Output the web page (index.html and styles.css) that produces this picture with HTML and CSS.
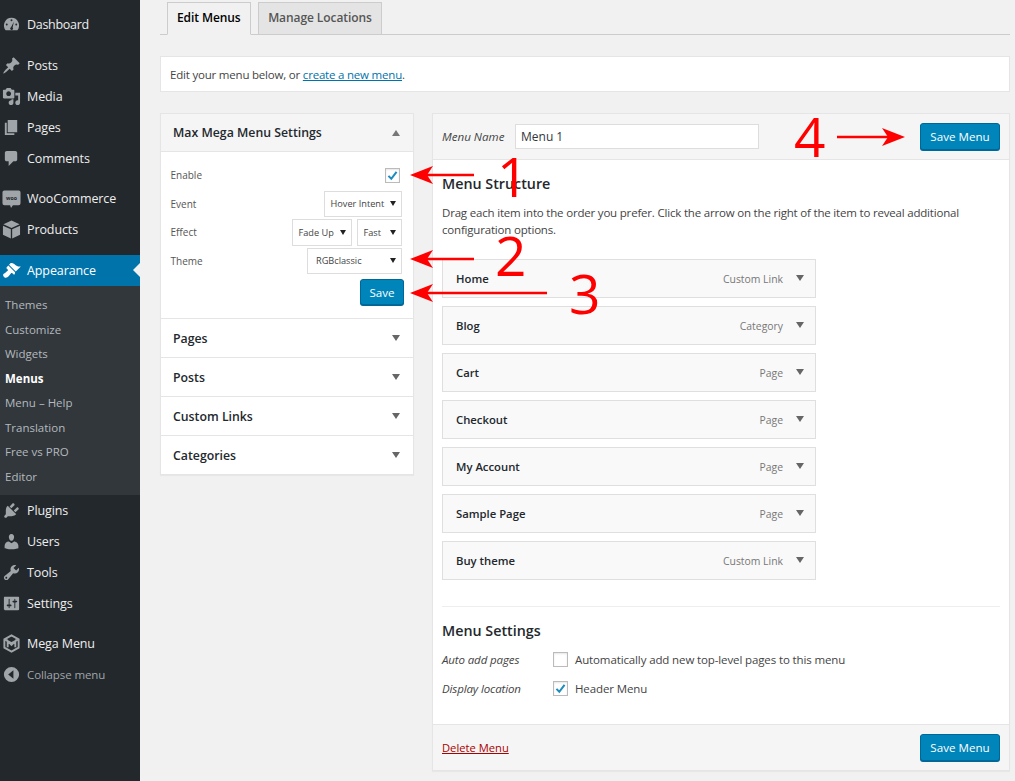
FILE: index.html
```html
<!DOCTYPE html>
<html lang="en">
<head>
<meta charset="utf-8">
<title>Menus</title>
<link rel="stylesheet" href="styles.css">
</head>
<body>
<div class="app">
<nav class="sidebar">
  <div class="group group-a">
    <a class="item"><svg class="ic" viewBox="0 0 20 20"><path d="M10 3a8 8 0 0 0-6.200 13h12.400A8 8 0 0 0 10 3zm0 1.500a1 1 0 1 1 0 2 1 1 0 0 1 0-2zM5 9a1 1 0 1 1 0 2 1 1 0 0 1 0-2zm10 0a1 1 0 1 1 0 2 1 1 0 0 1 0-2zM12.500 7l-1.300 6.200a1.500 1.500 0 1 1-1.700-.3z" fill-rule="evenodd"/></svg><span class="dash">Dashboard</span></a>
  </div>
  <div class="group">
    <a class="item"><svg class="ic" viewBox="0 0 20 20"><path d="M10.440 3.020l1.820-1.820 6.360 6.350-1.830 1.820c-1.050-.68-2.480-.57-3.410.36l-.75.75c-.92.93-1.040 2.350-.35 3.410l-1.830 1.820-2.410-2.410-2.800 2.790c-.42.42-3.380 2.710-3.800 2.290s1.860-3.390 2.280-3.810l2.790-2.790L4.100 9.360l1.830-1.820c1.050.69 2.480.57 3.400-.36l.75-.75c.93-.92 1.050-2.350.36-3.410z"/></svg>Posts</a>
    <a class="item"><svg class="ic" viewBox="0 0 20 20"><path d="M13 11V4c0-.55-.45-1-1-1h-1.670L9 1H5L3.670 3H2c-.55 0-1 .45-1 1v7c0 .55.45 1 1 1h10c.55 0 1-.45 1-1zM7 4.500c1.380 0 2.500 1.120 2.500 2.500S8.380 9.500 7 9.500 4.500 8.380 4.500 7 5.620 4.500 7 4.500zM14 6h5v10.500c0 1.380-1.120 2.500-2.500 2.500S14 17.880 14 16.500s1.120-2.500 2.500-2.500c.17 0 .34.020.5.050V9h-3V6zm-4 8.050V13h2v3.500c0 1.380-1.120 2.500-2.500 2.500S7 17.880 7 16.500 8.120 14 9.500 14c.17 0 .34.020.5.050z"/></svg>Media</a>
    <a class="item"><svg class="ic" viewBox="0 0 20 20"><path d="M6 15V2h10v13H6zm-1 1h8v2H3V5h2v11z"/></svg>Pages</a>
    <a class="item"><svg class="ic" viewBox="0 0 20 20"><path d="M5 2h9c1.100 0 2 .9 2 2v7c0 1.100-.9 2-2 2h-2l-5 5v-5H5c-1.100 0-2-.9-2-2V4c0-1.100.9-2 2-2z"/></svg>Comments</a>
  </div>
  <div class="group">
    <a class="item"><svg class="ic" viewBox="0 0 20 20"><path d="M2.500 1.500h15a2 2 0 0 1 2 2V15a2 2 0 0 1-2 2h-6l-2 3-1-3h-6a2 2 0 0 1-2-2V3.500a2 2 0 0 1 2-2z"/><text class="woo" x="10" y="11.500" text-anchor="middle">woo</text></svg>WooCommerce</a>
    <a class="item"><svg class="ic" viewBox="0 0 20 20"><path d="M10 .5l8.500 4-8.500 4-8.500-4zM1 6l8.300 3.800v9.700L1 15.500zM19 6v9.500l-8.300 4V9.800z"/></svg>Products</a>
  </div>
  <div class="group">
    <a class="item active"><svg class="ic" viewBox="0 0 20 20"><path d="M14.480 11.060L7.410 3.990l1.500-1.500c.5-.56 2.300-.47 3.510.32 1.210.8 1.430 1.280 2.910 2.100 1.180.64 2.450 1.260 4.450.85zm-.71.71L6.700 4.700 4.930 6.470c-.39.39-.39 1.020 0 1.410l1.060 1.060c.39.39.39 1.030 0 1.420-.6.6-1.430 1.110-2.210 1.690-.35.26-.7.53-1.010.84C1.430 13.230.4 14.990 2.140 16.730c1.740 1.740 3.500.71 4.840-.63.31-.31.58-.66.84-1.010.58-.78 1.090-1.610 1.690-2.210.39-.39 1.030-.39 1.420 0l1.060 1.060c.39.39 1.020.39 1.410 0z"/></svg>Appearance<span class="notch"></span></a>
    <div class="submenu">
      <a class="sub">Themes</a>
      <a class="sub">Customize</a>
      <a class="sub">Widgets</a>
      <a class="sub current">Menus</a>
      <a class="sub">Menu – Help</a>
      <a class="sub">Translation</a>
      <a class="sub">Free vs PRO</a>
      <a class="sub">Editor</a>
    </div>
    <a class="item"><svg class="ic" viewBox="0 0 20 20"><path d="M13.110 4.360L9.870 7.600 8 5.730l3.240-3.240c.35-.34 1.050-.2 1.560.32.52.51.66 1.210.31 1.550zm-8 1.770l.91-1.120 9.010 9.010-1.190.84c-.71.71-2.630 1.160-3.820 1.160H6.140L4.900 17.260c-.59.59-1.540.59-2.120 0-.59-.58-.59-1.530 0-2.120l1.240-1.240v-3.880c0-1.130.4-3.190 1.090-3.890zm7.260 3.970l3.240-3.240c.34-.35 1.040-.21 1.550.31.52.51.66 1.210.31 1.550l-3.240 3.250z"/></svg>Plugins</a>
    <a class="item"><svg class="ic" viewBox="0 0 20 20"><path d="M10 9.250c-2.270 0-2.730-3.440-2.730-3.440C7 4.020 7.820 2 9.970 2c2.160 0 2.980 2.020 2.710 3.810 0 0-.41 3.440-2.680 3.440zm0 2.570L12.720 10c2.390 0 4.520 2.330 4.520 4.530v2.490s-3.650 1.130-7.240 1.130c-3.650 0-7.240-1.130-7.240-1.130v-2.490c0-2.250 1.940-4.480 4.470-4.480z"/></svg>Users</a>
    <a class="item"><svg class="ic" viewBox="0 0 20 20"><path d="M16.680 9.770c-1.340 1.340-3.300 1.670-4.950.99l-5.410 6.520c-.99.99-2.590.99-3.580 0s-.99-2.590 0-3.570l6.520-5.420c-.68-1.650-.35-3.610.99-4.950 1.280-1.280 3.120-1.620 4.720-1.060l-2.890 2.890 2.820 2.820 2.860-2.870c.53 1.580.18 3.390-1.080 4.650zM3.810 16.210c.4.39 1.040.39 1.430 0 .4-.4.4-1.040 0-1.430-.39-.4-1.030-.4-1.430 0-.39.39-.39 1.030 0 1.430z"/></svg>Tools</a>
    <a class="item"><svg class="ic" viewBox="0 0 20 20"><path d="M18 16V4c0-.55-.45-1-1-1H3c-.55 0-1 .45-1 1v12c0 .55.45 1 1 1h14c.55 0 1-.45 1-1zM8 11h1c.55 0 1 .45 1 1s-.45 1-1 1H8v1.500c0 .28-.22.5-.5.5s-.5-.22-.5-.5V13H6c-.55 0-1-.45-1-1s.45-1 1-1h1V5.500c0-.28.22-.5.5-.5s.5.22.5.5V11zm5-2h-1c-.55 0-1-.45-1-1s.45-1 1-1h1V5.500c0-.28.22-.5.5-.5s.5.22.5.5V7h1c.55 0 1 .45 1 1s-.45 1-1 1h-1v5.500c0 .28-.22.5-.5.5s-.5-.22-.5-.5V9z"/></svg>Settings</a>
  </div>
  <div class="group">
    <a class="item"><svg class="ic" viewBox="0 0 20 20"><path class="hex" d="M10 1.500l7.500 4.200v8.600L10 18.500l-7.500-4.200V5.700z"/><path class="hex" d="M6 14V7.500l4 4 4-4V14M3 6l7 3.500L17 6"/></svg>Mega Menu</a>
    <a class="item collapse"><svg class="ic" viewBox="0 0 20 20"><path d="M10 2a8 8 0 1 1 0 16 8 8 0 0 1 0-16zm2 3.500L6.500 10l5.500 4.500z" fill-rule="evenodd"/></svg>Collapse menu</a>
  </div>
</nav>

<main class="main">
  <div class="tabs">
    <a class="tab tab-on">Edit Menus</a>
    <a class="tab">Manage Locations</a>
  </div>
  <div class="notice">Edit your menu below, or <a class="link">create a new menu</a>.</div>
  <div class="columns">
    <aside class="accordion">
      <h3 class="acc-head acc-open">Max Mega Menu Settings<span class="tri tri-up"></span></h3>
      <div class="acc-body">
        <div class="field"><span>Enable</span><span class="check check-small"><svg viewBox="0 0 16 16"><path d="M3 8.500l3.500 3.500L13 3.500" /></svg></span></div>
        <div class="field"><span>Event</span><span class="sel w78">Hover Intent<i></i></span></div>
        <div class="field"><span>Effect</span><span class="sels"><span class="sel w60">Fade Up<i></i></span><span class="sel w45">Fast<i></i></span></span></div>
        <div class="field"><span>Theme</span><span class="sel w95">RGBclassic<i></i></span></div>
        <div class="save-row"><a class="btn btn-small">Save</a></div>
      </div>
      <h3 class="acc-head acc-closed">Pages<span class="tri"></span></h3>
      <h3 class="acc-head acc-closed">Posts<span class="tri"></span></h3>
      <h3 class="acc-head acc-closed">Custom Links<span class="tri"></span></h3>
      <h3 class="acc-head acc-closed">Categories<span class="tri"></span></h3>
    </aside>
    <section class="panel">
      <header class="panel-head">
        <label class="name-label">Menu Name</label>
        <span class="name-input">Menu 1</span>
        <a class="btn btn-right">Save Menu</a>
      </header>
      <div class="panel-body">
        <h3 class="title">Menu Structure</h3>
        <p class="help">Drag each item into the order you prefer. Click the arrow on the right of the item to reveal additional configuration options.</p>
        <ul class="rows">
          <li class="row"><b>Home</b><span>Custom Link</span><i class="tri"></i></li>
          <li class="row"><b>Blog</b><span>Category</span><i class="tri"></i></li>
          <li class="row"><b>Cart</b><span>Page</span><i class="tri"></i></li>
          <li class="row"><b>Checkout</b><span>Page</span><i class="tri"></i></li>
          <li class="row"><b>My Account</b><span>Page</span><i class="tri"></i></li>
          <li class="row"><b>Sample Page</b><span>Page</span><i class="tri"></i></li>
          <li class="row"><b>Buy theme</b><span>Custom Link</span><i class="tri"></i></li>
        </ul>
        <div class="rule"></div>
        <h3 class="title">Menu Settings</h3>
        <div class="opt"><em>Auto add pages</em><span class="check"></span><span>Automatically add new top-level pages to this menu</span></div>
        <div class="opt"><em>Display location</em><span class="check"><svg viewBox="0 0 16 16"><path d="M3 8.500l3.500 3.500L13 3.500" /></svg></span><span>Header Menu</span></div>
      </div>
      <footer class="panel-foot">
        <a class="delete">Delete Menu</a>
        <a class="btn">Save Menu</a>
      </footer>
    </section>
  </div>
</main>
</div>

<svg class="arrows" viewBox="0 0 1015 781" aria-hidden="true">
  <g class="arrow">
    <path d="M474 175H420M837 137H894M474 259H420M547 293H420"/>
  </g>
  <path class="head" d="M410 175l23-9-6 9 6 9zM410 259l23-9-6 9 6 9zM410 293l23-9-6 9 6 9zM905 137l-23-9 6 9-6 9z"/>
</svg>
<span class="num num-1">1</span>
<span class="num num-2">2</span>
<span class="num num-3">3</span>
<span class="num num-4">4</span>
</body>
</html>
```
FILE: styles.css
```css
* { box-sizing: border-box; }
html, body { margin: 0; height: 781px; overflow: hidden; }
body { background: #f1f1f1; font-family: "Open Sans", sans-serif; font-size: 11.500px; color: #444; position: relative; }
a { text-decoration: none; }
ul { list-style: none; margin: 0; padding: 0; }
.app { display: flex; height: 781px; }

.sidebar { width: 140px; flex: none; background: #23282d; padding-top: 8.500px; }
.group { margin-bottom: 9.500px; }
.group-a { margin-bottom: 10px; }
.item { display: flex; align-items: center; height: 31px; padding-left: 2px; color: #eee; font-size: 12.500px; letter-spacing: -.1px; position: relative; }
.dash { letter-spacing: -.3px; }
.ic { flex: none; width: 19px; height: 19px; margin-right: 6px; fill: #a0a5aa; }
.woo { font-size: 5.500px; fill: #23282d; font-family: "Open Sans", sans-serif; font-weight: 700; letter-spacing: 0; }
.hex { fill: none; stroke: #a0a5aa; stroke-width: 2; }
.active { background: #0073aa; color: #fff; }
.active .ic { fill: #fff; }
.notch { position: absolute; right: 0; top: 8px; border: 7.500px solid transparent; border-left-width: 0; border-right-color: #f1f1f1; }
.submenu { background: #32373c; padding: 7px 0 6px; }
.sub { display: flex; align-items: center; height: 24.500px; padding-left: 5px; color: #b4b9be; font-size: 11.500px; }
.current { color: #fff; font-weight: 700; }
.collapse { color: #a0a5aa; font-size: 11.500px; }

.main { flex: 1; padding: 0 5px 0 20px; min-width: 0; }
.tabs { display: flex; gap: 7px; padding-left: 7px; height: 35px; padding-top: 2px; border-bottom: 1px solid #ccc; }
.tab { height: 33px; display: flex; align-items: center; padding: 0 9.500px 2px; border: 1px solid #ccc; background: #e4e4e4; color: #555; font-size: 12px; font-weight: 600; letter-spacing: -.08px; }
.tab-on { background: #f1f1f1; color: #000; border-bottom-color: #f1f1f1; padding: 0 9px 2px; }
.notice { margin-top: 21px; height: 36px; background: #fff; border: 1px solid #e5e5e5; padding-left: 9px; display: flex; align-items: center; white-space: pre; letter-spacing: -.2px; }
.link { color: #0073aa; text-decoration: underline; }
.columns { display: flex; gap: 18px; margin-top: 21px; align-items: flex-start; }

.accordion { width: 254px; flex: none; background: #fff; border: 1px solid #e5e5e5; box-shadow: 0 1px 1px rgba(0,0,0,.04); }
.acc-head { margin: 0; height: 39px; display: flex; align-items: center; justify-content: space-between; padding: 0 13px 0 12px; font-size: 12.300px; font-weight: 600; color: #23282d; background: #fff; border-bottom: 1px solid #e5e5e5; }
.acc-open { background: #f5f5f5; height: 38px; }
.acc-closed:last-child { border-bottom: 0; height: 38px; }
.tri { display: block; width: 0; height: 0; border-left: 4px solid transparent; border-right: 4px solid transparent; border-top: 6px solid #666; }
.tri-up { border-top: 0; border-bottom: 6px solid #777; }
.acc-body { height: 167px; padding: 9px 9px 0 9.500px; border-bottom: 1px solid #e5e5e5; display: flex; flex-direction: column; font-size: 10px; color: #555; }
.field { display: flex; align-items: center; justify-content: space-between; height: 28.500px; padding-right: 2px; flex: none; }
.sel { display: flex; align-items: center; justify-content: space-between; height: 26.500px; padding: 0 5px 0 5.500px; border: 1px solid #ddd; background: #fff; color: #444; font-size: 9.200px; }
.sel i { width: 0; height: 0; border-left: 3.500px solid transparent; border-right: 3.500px solid transparent; border-top: 5px solid #222; }
.sels { display: flex; gap: 5px; }
.w78 { width: 78px; }
.w60 { width: 60px; }
.w45 { width: 45px; }
.w95 { width: 95px; padding-left: 8px; }
.check { width: 15px; height: 15px; border: 1px solid #bbb; background: #fff; display: block; flex: none; box-shadow: inset 0 1px 2px rgba(0,0,0,.1); }
.check-small { margin-right: 2px; }
.check svg { display: block; width: 100%; height: 100%; fill: none; stroke: #1e8cbe; stroke-width: 2.500; }
.save-row { display: flex; justify-content: flex-end; margin-top: 4px; }
.btn { display: inline-flex; align-items: center; justify-content: center; width: 80px; height: 27px; background: #0085ba; border: 1px solid #006799; border-radius: 3px; color: #fff; font-size: 11.600px; box-shadow: 0 1px 0 #006799; }
.btn-small { width: 44px; height: 26px; }

.panel { flex: 1; min-width: 0; background: #fff; border: 1px solid #e5e5e5; box-shadow: 0 1px 1px rgba(0,0,0,.04); }
.panel-head { height: 46px; background: #f5f5f5; border-bottom: 1px solid #e5e5e5; display: flex; align-items: center; padding: 0 9px; }
.name-label { font-style: italic; font-size: 11.600px; color: #444; width: 73px; }
.name-input { width: 244px; height: 25px; background: #fff; border: 1px solid #ddd; display: flex; align-items: center; padding-left: 5px; font-size: 12px; color: #32373c; }
.btn-right { margin-left: auto; }
.panel-body { height: 563.500px; padding: 0 9px; }
.title { margin: 0; font-size: 14.300px; font-weight: 600; color: #23282d; }
.panel-body > .title:first-child { padding-top: 14px; line-height: 20px; }
.help { margin: 10px 0 0; line-height: 17px; font-size: 11.500px; letter-spacing: -.19px; color: #444; width: 540px; }
.rows { margin-top: 21px; display: flex; flex-direction: column; gap: 8px; width: 374px; }
.row { height: 39px; display: flex; align-items: center; padding: 0 11px 0 13px; background: #f9f9f9; border: 1px solid #dfdfdf; }
.row b { font-weight: 600; color: #23282d; font-size: 11.300px; flex: 1; }
.row span { font-size: 10.400px; color: #777; }
.row .tri { margin-left: 13px; margin-top: -1px; }
.rule { height: 1px; background: #eee; margin-top: 26px; }
.rule + .title { margin-top: 14px; line-height: 20px; margin-bottom: 4px; }
.opt { display: flex; align-items: center; height: 29px; font-size: 11.500px; letter-spacing: -.12px; }
.opt em { width: 111px; flex: none; color: #444; }
.opt .check { margin-right: 7px; }
.panel-foot { height: 46px; background: #f5f5f5; border-top: 1px solid #e5e5e5; display: flex; align-items: center; justify-content: space-between; padding: 0 9px; }
.delete { color: #a00; text-decoration: underline; font-size: 11.200px; }

.arrows { position: absolute; left: 0; top: 0; width: 1015px; height: 781px; pointer-events: none; }
.arrow path { stroke: #f00; stroke-width: 2.500; fill: none; }
.head { fill: #f00; }
.num { position: absolute; color: #f00; font-size: 55px; line-height: 56px; font-family: "Open Sans", sans-serif; font-weight: 400; }
.num-1 { left: 497px; top: 148px; }
.num-2 { left: 495px; top: 227px; }
.num-3 { left: 569px; top: 265px; }
.num-4 { left: 794px; top: 108px; }
```
